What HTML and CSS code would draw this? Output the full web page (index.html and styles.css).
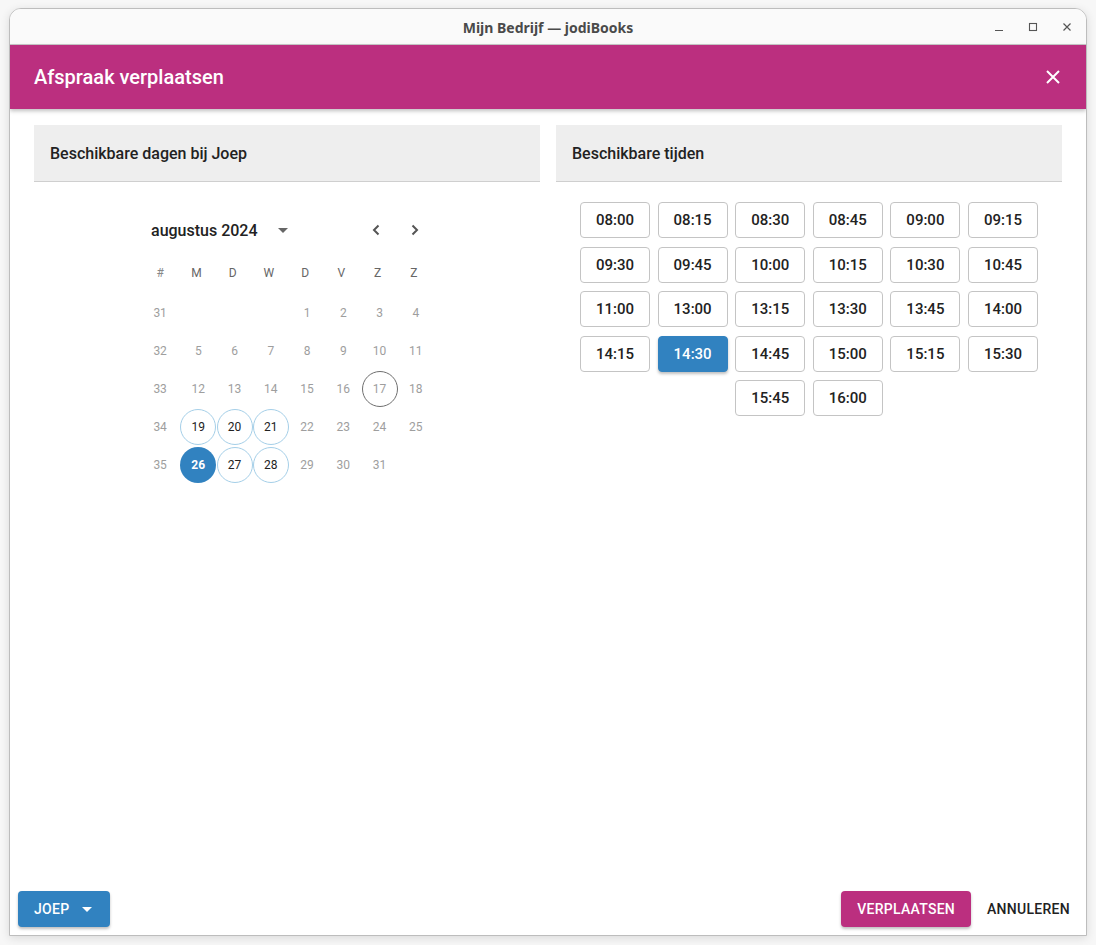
FILE: index.html
```html
<!DOCTYPE html>
<html lang="nl">
<head>
<meta charset="utf-8">
<title>Mijn Bedrijf — jodiBooks</title>
<link rel="stylesheet" href="styles.css">
</head>
<body>
<div class="window">
  <div class="titlebar">
    <span class="title">Mijn Bedrijf — jodiBooks</span>
    <div class="wctl">
      <svg width="10" height="10" viewBox="0 0 10 10"><path d="M1 8.5h8" stroke="#555" stroke-width="1.2"/></svg>
      <svg width="10" height="10" viewBox="0 0 10 10"><rect x="1.5" y="1.5" width="7" height="7" fill="none" stroke="#555" stroke-width="1.1"/></svg>
      <svg width="10" height="10" viewBox="0 0 10 10"><path d="M1.5 1.5l7 7M8.5 1.5l-7 7" stroke="#555" stroke-width="1.2"/></svg>
    </div>
  </div>
  <div class="header">
    <h1>Afspraak verplaatsen</h1>
    <svg class="close" width="14" height="14" viewBox="0 0 14 14"><path d="M1 1l12 12M13 1L1 13" stroke="#fff" stroke-width="2"/></svg>
  </div>
  <div class="content">
    <section class="panel">
      <div class="panel-head">Beschikbare dagen bij Joep</div>
      <div class="calendar">
        <div class="month-row">
          <span class="month">augustus 2024</span>
          <svg class="caret" width="10" height="5" viewBox="0 0 10 5"><path d="M0 0h10L5 5z" fill="#666"/></svg>
          <span class="spacer"></span>
          <svg class="nav" width="24" height="24" viewBox="0 0 24 24"><path d="M14.5 7.5L10 12l4.5 4.5" fill="none" stroke="#555" stroke-width="2"/></svg>
          <svg class="nav" width="24" height="24" viewBox="0 0 24 24"><path d="M9.5 7.5L14 12l-4.5 4.5" fill="none" stroke="#555" stroke-width="2"/></svg>
        </div>
        <div class="grid weekdays">
          <span>#</span><span>M</span><span>D</span><span>W</span><span>D</span><span>V</span><span>Z</span><span>Z</span>
        </div>
        <div class="grid days">
          <span class="wk">31</span><span></span><span></span><span></span><span class="d">1</span><span class="d">2</span><span class="d">3</span><span class="d">4</span>
          <span class="wk">32</span><span class="d">5</span><span class="d">6</span><span class="d">7</span><span class="d">8</span><span class="d">9</span><span class="d">10</span><span class="d">11</span>
          <span class="wk">33</span><span class="d">12</span><span class="d">13</span><span class="d">14</span><span class="d">15</span><span class="d">16</span><span class="d today">17</span><span class="d">18</span>
          <span class="wk">34</span><span class="d avail">19</span><span class="d avail">20</span><span class="d avail">21</span><span class="d">22</span><span class="d">23</span><span class="d">24</span><span class="d">25</span>
          <span class="wk">35</span><span class="d sel">26</span><span class="d avail">27</span><span class="d avail">28</span><span class="d">29</span><span class="d">30</span><span class="d">31</span><span></span>
        </div>
      </div>
    </section>
    <section class="panel">
      <div class="panel-head">Beschikbare tijden</div>
      <div class="times">
        <button class="time">08:00</button><button class="time">08:15</button><button class="time">08:30</button><button class="time">08:45</button><button class="time">09:00</button><button class="time">09:15</button>
        <button class="time">09:30</button><button class="time">09:45</button><button class="time">10:00</button><button class="time">10:15</button><button class="time">10:30</button><button class="time">10:45</button>
        <button class="time">11:00</button><button class="time">13:00</button><button class="time">13:15</button><button class="time">13:30</button><button class="time">13:45</button><button class="time">14:00</button>
        <button class="time">14:15</button><button class="time active">14:30</button><button class="time">14:45</button><button class="time">15:00</button><button class="time">15:15</button><button class="time">15:30</button>
        <button class="time">15:45</button><button class="time">16:00</button>
      </div>
    </section>
  </div>
  <div class="footer">
    <button class="btn btn-blue">JOEP <svg width="10" height="5" viewBox="0 0 10 5"><path d="M0 0h10L5 5z" fill="#fff"/></svg></button>
    <span class="spacer"></span>
    <button class="btn btn-magenta">VERPLAATSEN</button>
    <button class="btn btn-text">ANNULEREN</button>
  </div>
</div>
</body>
</html>
```
FILE: styles.css
```css
* { box-sizing: border-box; }
html, body { margin: 0; padding: 0; }
body {
  background: #f7f7f7;
  font-family: Roboto, "Liberation Sans", sans-serif;
  width: 1096px;
  height: 945px;
  overflow: hidden;
}
.window {
  margin: 8px 0 0 9px;
  width: 1078px;
  height: 928px;
  background: #fff;
  border: 1px solid #bdbdbd;
  border-radius: 12px 12px 0 0;
  box-shadow: 0 2px 10px rgba(0,0,0,0.12);
  display: flex;
  flex-direction: column;
  overflow: hidden;
}
.titlebar {
  height: 36px;
  flex: none;
  background: #fafafa;
  border-bottom: 1px solid #c8c8c8;
  display: flex;
  align-items: center;
  justify-content: center;
  position: relative;
}
.title {
  font-family: "Noto Sans", "DejaVu Sans", sans-serif;
  font-weight: 700;
  font-size: 14px;
  color: #4a4a4a;
  margin-top: 1px;
}
.wctl {
  position: absolute;
  right: 14px;
  top: 13px;
  display: flex;
  gap: 24px;
}
.wctl svg { display: block; }
.header {
  height: 64px;
  flex: none;
  background: #bb2f7f;
  display: flex;
  align-items: center;
  padding: 0 26px 0 24px;
  box-shadow: 0 2px 4px rgba(0,0,0,0.25);
  position: relative;
  z-index: 1;
}
.header h1 {
  margin: 0;
  flex: 1;
  color: #fff;
  font-size: 20px;
  font-weight: 500;
}
.close { display: block; }
.content {
  flex: 1;
  display: flex;
  gap: 16px;
  padding: 16px 24px 0;
}
.panel { flex: 1; min-width: 0; }
.panel-head {
  height: 57px;
  background: #eeeeee;
  border-bottom: 1px solid #cfcfcf;
  display: flex;
  align-items: center;
  padding: 0 16px;
  font-size: 16px;
  font-weight: 500;
  color: #222;
}
.calendar {
  width: 290px;
  margin: 30px auto 0;
}
.month-row {
  height: 36px;
  display: flex;
  align-items: center;
  padding-left: 9px;
}
.month {
  font-size: 16px;
  font-weight: 500;
  color: #222;
}
.caret { margin-left: 20px; display: block; }
.spacer { flex: 1; }
.nav { display: block; margin-left: 15px; }
.month-row .nav:first-of-type { margin-right: 1px; }
.month-row .nav:last-child { margin-right: 5px; }
.grid {
  display: grid;
  grid-template-columns: repeat(8, 36.25px);
}
.weekdays {
  margin-top: 5px;
  height: 40px;
  align-items: center;
  font-size: 12px;
  color: #666;
}
.weekdays span { text-align: center; }
.weekdays span:first-child { color: #888; }
.days {
  grid-auto-rows: 38px;
  margin-top: 1px;
}
.days span {
  display: flex;
  align-items: center;
  justify-content: center;
  font-size: 12px;
  color: #9e9e9e;
}
.days .d {
  width: 36px;
  height: 36px;
  margin: 1px 0 0 2px;
  border-radius: 50%;
}
.days .today { border: 1px solid #6f6f6f; }
.days .avail { border: 1px solid #a5cfe8; color: #222; }
.days .sel { background: #3182c0; color: #fff; font-weight: 700; }
.times {
  display: flex;
  flex-wrap: wrap;
  justify-content: center;
  padding: 16px 15px 0;
}
.time {
  width: 70px;
  height: 36px;
  margin: 4px 3.8px 4.5px;
  border: 1px solid #c4c4c4;
  border-radius: 4px;
  background: #fff;
  font-family: Roboto, "Liberation Sans", sans-serif;
  font-size: 15px;
  font-weight: 500;
  color: #222;
  padding: 0;
}
.time.active {
  background: #3182c0;
  border-color: #3182c0;
  color: #fff;
  box-shadow: 0 2px 3px rgba(0,0,0,0.25);
}
.footer {
  flex: none;
  display: flex;
  align-items: center;
  gap: 8px;
  padding: 0 8px 8px;
}
.btn {
  height: 36px;
  border: none;
  border-radius: 4px;
  font-family: Roboto, "Liberation Sans", sans-serif;
  font-size: 14px;
  font-weight: 500;
  letter-spacing: 0.02em;
  padding: 0 16px;
  display: flex;
  align-items: center;
}
.btn-blue {
  width: 92px;
  background: #3182c0;
  color: #fff;
  box-shadow: 0 2px 3px rgba(0,0,0,0.25);
  gap: 13px;
}
.btn-magenta {
  background: #bb2f7f;
  color: #fff;
  box-shadow: 0 2px 3px rgba(0,0,0,0.25);
}
.btn-text {
  background: transparent;
  color: #222;
  padding: 0 8px;
}
```
